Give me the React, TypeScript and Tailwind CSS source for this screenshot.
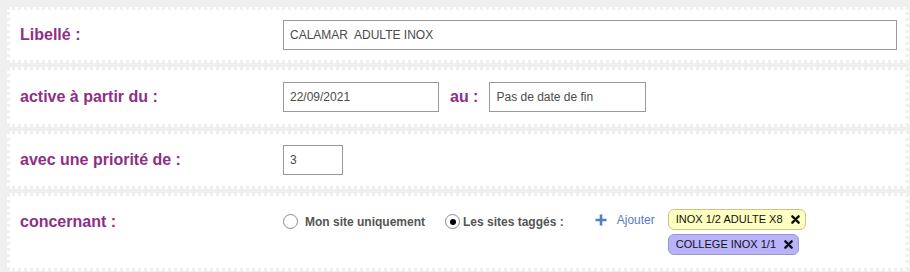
import { useState } from "react";

const FONT = { fontFamily: '"Liberation Sans", Arial, sans-serif' };

function Panel({ className, children }: { className: string; children: React.ReactNode }) {
  return (
    <div className={`bg-white border-[3px] border-dotted border-[#efefef] pl-[10px] pr-[9px] flex ${className}`}>
      {children}
    </div>
  );
}

function Label({ children }: { children: React.ReactNode }) {
  return <div className="w-[263px] shrink-0 text-[16px] font-bold text-[#8e2f86]">{children}</div>;
}

function Radio({ checked, onClick }: { checked: boolean; onClick: () => void }) {
  return (
    <span
      onClick={onClick}
      className="w-[15px] h-[15px] rounded-full border border-[#8a8a8a] bg-white flex items-center justify-center shrink-0"
    >
      {checked && <span className="w-[6px] h-[6px] rounded-full bg-black" />}
    </span>
  );
}

function Tag({ text, tone }: { text: string; tone: "yellow" | "purple" }) {
  const cls =
    tone === "yellow"
      ? "bg-[#ffffbf] border-[#c9c48c]"
      : "bg-[#b9b3fc] border-[#9c97c9]";
  return (
    <div className={`h-[21px] rounded-[6px] border ${cls} pl-[7px] pr-[5px] flex items-center gap-[8px] text-[11px] text-[#111]`}>
      <span>{text}</span>
      <svg width="9" height="9" viewBox="0 0 10 10">
        <path d="M1.5 1.5 L8.5 8.5 M8.5 1.5 L1.5 8.5" stroke="#111" strokeWidth="2.6" strokeLinecap="round" />
      </svg>
    </div>
  );
}

export default function App() {
  const [mode, setMode] = useState("tagged");
  const inputCls =
    "h-[30px] border border-[#9a9a9a] bg-white px-[6px] text-[12px] text-[#4a4a4a] outline-none";

  return (
    <div className="w-[910px] h-[272px] bg-[#efefef] pt-[7px] pl-[7px] pr-[1px] flex flex-col gap-[4px]" style={FONT}>
      {/* Libellé */}
      <Panel className="h-[56px] items-center">
        <Label>Libellé :</Label>
        <input className={`${inputCls} flex-1`} defaultValue="CALAMAR  ADULTE INOX" />
      </Panel>

      {/* Dates */}
      <Panel className="h-[60px] items-center">
        <Label>active à partir du :</Label>
        <input className={`${inputCls} w-[156px]`} defaultValue="22/09/2021" />
        <span className="mx-[11px] text-[16px] font-bold text-[#8e2f86]">au :</span>
        <input className={`${inputCls} w-[157px]`} defaultValue="Pas de date de fin" />
      </Panel>

      {/* Priorité */}
      <Panel className="h-[58px] items-center">
        <Label>avec une priorité de :</Label>
        <input className={`${inputCls} w-[60px]`} defaultValue="3" />
      </Panel>

      {/* Concernant */}
      <Panel className="h-[78px] items-start pt-[13px]">
        <div className="h-[25px] flex items-center">
          <Label>concernant :</Label>
        </div>
        <div className="h-[25px] flex items-center text-[12px] font-bold text-[#555]">
          <Radio checked={mode === "mine"} onClick={() => setMode("mine")} />
          <span className="ml-[7px]">Mon site uniquement</span>
          <span className="ml-[20px]">
            <Radio checked={mode === "tagged"} onClick={() => setMode("tagged")} />
          </span>
          <span className="ml-[3px]">Les sites taggés :</span>
        </div>
        <div className="h-[21px] flex items-center ml-[31px] text-[12px] text-[#5a7bc0]">
          <svg width="12" height="12" viewBox="0 0 12 12">
            <path d="M6 0.5 V11.5 M0.5 6 H11.5" stroke="#4d7fc2" strokeWidth="2.6" />
          </svg>
          <span className="ml-[10px]">Ajouter</span>
        </div>
        <div className="ml-[13px] flex flex-col items-start gap-[4px]">
          <Tag text="INOX 1/2 ADULTE X8" tone="yellow" />
          <Tag text="COLLEGE INOX 1/1" tone="purple" />
        </div>
      </Panel>
    </div>
  );
}
